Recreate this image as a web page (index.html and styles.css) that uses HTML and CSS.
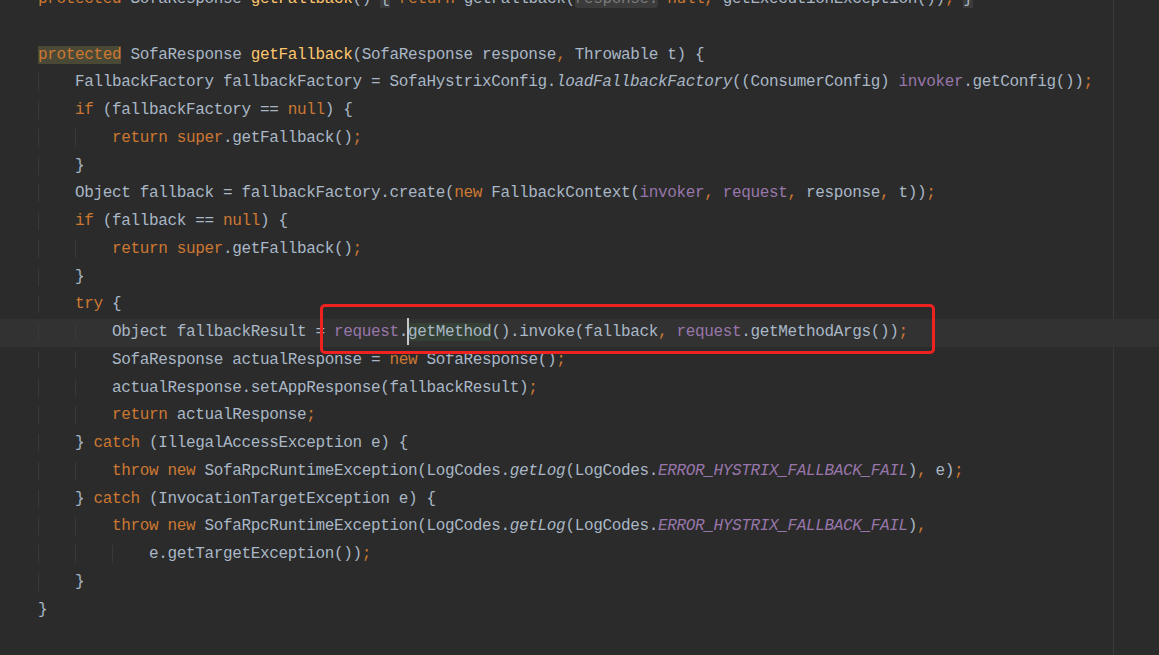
FILE: index.html
```html
<!DOCTYPE html>
<html lang="en">
<head>
    <meta charset="UTF-8">
    <meta name="viewport" content="width=device-width, initial-scale=1.0">
    <title>SofaHystrixInvoker.java</title>
    <link rel="stylesheet" href="styles.css">
</head>
<body>
    <div class="editor">
        <div class="code">
<div class="line"><span class="kw">protected</span> SofaResponse <span class="fn">getFallback</span>() <span class="fold">{</span> <span class="kw">return</span> getFallback(<span class="hint">response:</span> <span class="kw">null</span><span class="p">,</span> getExecutionException())<span class="p">;</span> <span class="fold">}</span></div>
<div class="line"> </div>
<div class="line"><span class="kw hl-decl">protected</span> SofaResponse <span class="fn">getFallback</span>(SofaResponse response<span class="p">,</span> Throwable t) {</div>
<div class="line"><span class="ig">    </span>FallbackFactory fallbackFactory = SofaHystrixConfig.<span class="st">loadFallbackFactory</span>((ConsumerConfig) <span class="fd">invoker</span>.getConfig())<span class="p">;</span></div>
<div class="line"><span class="ig">    </span><span class="kw">if</span> (fallbackFactory == <span class="kw">null</span>) {</div>
<div class="line"><span class="ig">    </span><span class="ig">    </span><span class="kw">return super</span>.getFallback()<span class="p">;</span></div>
<div class="line"><span class="ig">    </span>}</div>
<div class="line"><span class="ig">    </span>Object fallback = fallbackFactory.create(<span class="kw">new</span> FallbackContext(<span class="fd">invoker</span><span class="p">,</span> <span class="fd">request</span><span class="p">,</span> response<span class="p">,</span> t))<span class="p">;</span></div>
<div class="line"><span class="ig">    </span><span class="kw">if</span> (fallback == <span class="kw">null</span>) {</div>
<div class="line"><span class="ig">    </span><span class="ig">    </span><span class="kw">return super</span>.getFallback()<span class="p">;</span></div>
<div class="line"><span class="ig">    </span>}</div>
<div class="line"><span class="ig">    </span><span class="kw">try</span> {</div>
<div class="line current"><span class="ig">    </span><span class="ig">    </span>Object fallbackResult = <span class="fd">request</span>.<span class="hl-use">getMethod</span>().invoke(fallback<span class="p">,</span> <span class="fd">request</span>.getMethodArgs())<span class="p">;</span></div>
<div class="line"><span class="ig">    </span><span class="ig">    </span>SofaResponse actualResponse = <span class="kw">new</span> SofaResponse()<span class="p">;</span></div>
<div class="line"><span class="ig">    </span><span class="ig">    </span>actualResponse.setAppResponse(fallbackResult)<span class="p">;</span></div>
<div class="line"><span class="ig">    </span><span class="ig">    </span><span class="kw">return</span> actualResponse<span class="p">;</span></div>
<div class="line"><span class="ig">    </span>} <span class="kw">catch</span> (IllegalAccessException e) {</div>
<div class="line"><span class="ig">    </span><span class="ig">    </span><span class="kw">throw new</span> SofaRpcRuntimeException(LogCodes.<span class="st">getLog</span>(LogCodes.<span class="cn">ERROR_HYSTRIX_FALLBACK_FAIL</span>)<span class="p">,</span> e)<span class="p">;</span></div>
<div class="line"><span class="ig">    </span>} <span class="kw">catch</span> (InvocationTargetException e) {</div>
<div class="line"><span class="ig">    </span><span class="ig">    </span><span class="kw">throw new</span> SofaRpcRuntimeException(LogCodes.<span class="st">getLog</span>(LogCodes.<span class="cn">ERROR_HYSTRIX_FALLBACK_FAIL</span>)<span class="p">,</span></div>
<div class="line"><span class="ig">    </span><span class="ig">    </span><span class="ig">    </span>e.getTargetException())<span class="p">;</span></div>
<div class="line"><span class="ig">    </span>}</div>
<div class="line">}</div>
        </div>
        <div class="caret"></div>
        <div class="mark"></div>
    </div>
</body>
</html>
```

FILE: styles.css
```css
html, body {
    margin: 0;
    padding: 0;
    background-color: #2b2b2b;
    overflow: hidden;
}
.editor {
    position: relative;
    width: 1159px;
    height: 655px;
    overflow: hidden;
    background: linear-gradient(to right, transparent 1113px, #3a3a3a 1113px, #3a3a3a 1114px, transparent 1114px);
}
.code {
    margin-top: -14px;
    font-family: "Liberation Mono", monospace;
    font-size: 16px;
    letter-spacing: -0.35px;
    color: #a9b7c6;
}
.line {
    height: 27.75px;
    line-height: 27.75px;
    padding-left: 38px;
    white-space: pre;
}
.line.current {
    background: #323232;
}
.ig {
    box-shadow: inset 1px 0 #393939;
}
.kw {
    color: #cc7832;
}
.p {
    color: #cc7832;
}
.fn {
    color: #ffc66d;
}
.fd {
    color: #9876aa;
}
.st {
    font-style: italic;
}
.cn {
    color: #9876aa;
    font-style: italic;
}
.fold {
    background: #3b3b3b;
}
.hint {
    color: #7a7a7a;
    background: #3b3b3b;
    border-radius: 3px;
}
.hl-decl {
    background: #4a4936;
}
.hl-use {
    background: #344134;
}
.caret {
    position: absolute;
    left: 407px;
    top: 318px;
    width: 2px;
    height: 27px;
    background: #c8c8c8;
}
.mark {
    position: absolute;
    left: 320px;
    top: 304px;
    width: 609px;
    height: 44px;
    border: 3px solid #ef2222;
    border-radius: 5px;
}
```
